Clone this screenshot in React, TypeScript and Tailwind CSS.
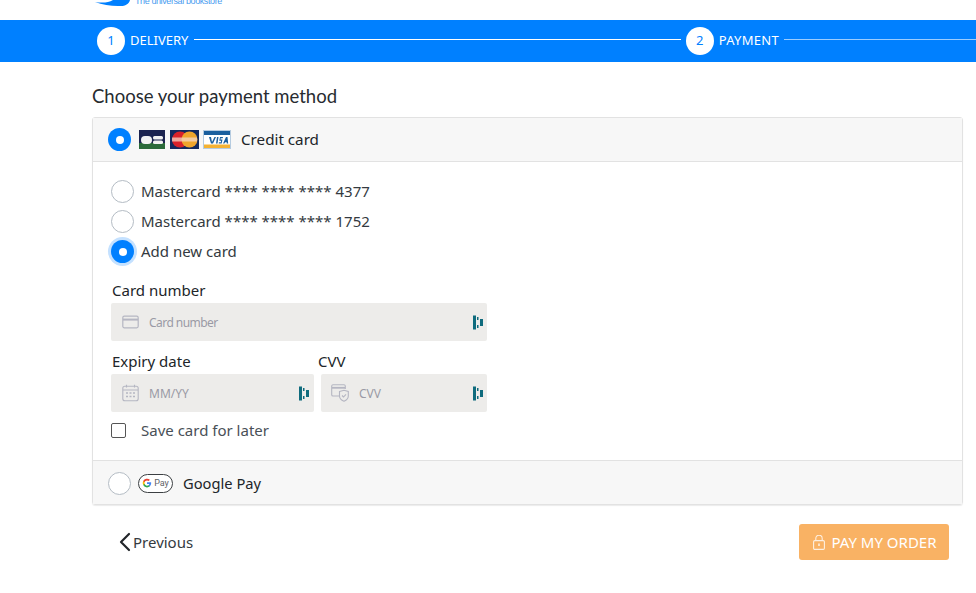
import React from 'react';
import { ChevronLeft } from 'lucide-react';

const Radio = ({ checked, ring, size = 'w-[23px] h-[23px]' }: { checked?: boolean; ring?: boolean; size?: string }) => (
  <span
    className={`${size} shrink-0 rounded-full flex items-center justify-center ${
      checked ? 'bg-[#0080ff]' : 'bg-white border border-[#b4bcc4]'
    } ${ring ? 'shadow-[0_0_0_3px_#c4e1ff]' : ''}`}
  >
    {checked && <span className="w-[8px] h-[8px] rounded-full bg-white" />}
  </span>
);

const Step = ({ n, label, labelClass = '' }: { n: number; label: string; labelClass?: string }) => (
  <>
    <span className="w-[28px] h-[28px] shrink-0 rounded-full bg-white text-[#0080ff] text-[13px] flex items-center justify-center">{n}</span>
    <span className={`ml-[5px] text-white text-[13px] shrink-0 ${labelClass}`}>{label}</span>
  </>
);

const FieldMark = () => (
  <svg width="12" height="15" viewBox="0 0 12 15" className="shrink-0">
    <rect x="1" y="0.5" width="3" height="14" fill="#0f6b7d" />
    <rect x="5" y="2" width="1.500" height="3" fill="#0f6b7d" />
    <rect x="5" y="10" width="1.500" height="3" fill="#0f6b7d" />
    <rect x="8" y="4" width="3" height="7" fill="#0f6b7d" />
  </svg>
);

const CardIcon = () => (
  <svg width="17" height="14" viewBox="0 0 17 14" fill="none" stroke="#b5b6c2" strokeWidth="1.2">
    <rect x="0.8" y="1.2" width="15.4" height="11.6" rx="1.5" />
    <path d="M1 4.6h15" strokeWidth="2" />
  </svg>
);

const CalendarIcon = () => (
  <svg width="17" height="18" viewBox="0 0 17 18" fill="none" stroke="#b5b6c2" strokeWidth="1.1">
    <rect x="0.8" y="2.2" width="15.4" height="14.6" rx="2" />
    <path d="M1 6h15M4.500 0.800v2.600M12.500 0.800v2.600" />
    <path d="M4 9h2M7.500 9h2M11 9h2M4 12.500h2M7.500 12.500h2M11 12.500h2" strokeWidth="1.4" />
  </svg>
);

const CvvIcon = () => (
  <svg width="18" height="18" viewBox="0 0 18 18" fill="none" stroke="#b5b6c2" strokeWidth="1.1">
    <path d="M8 12H2a1.300 1.300 0 0 1-1.300-1.300V2A1.300 1.300 0 0 1 2 .800h11A1.300 1.300 0 0 1 14.300 2v3" />
    <path d="M1 3.800h13" strokeWidth="1.8" />
    <path d="M8.500 7.500l4.500-1.300 4.300 1.300v4.500c0 2.500-2 4.300-4.300 5.200-2.400-.900-4.500-2.700-4.500-5.200z" fill="#edecea" />
    <path d="M11 11.500l1.500 1.500 2.500-2.700" />
  </svg>
);

const CbLogo = () => (
  <svg width="26" height="19" viewBox="0 0 26 19" className="mr-px">
    <rect width="26" height="13" fill="#1c2450" />
    <rect y="13" width="26" height="6" fill="#2b6a3a" />
    <rect x="2" y="6" width="11" height="8" rx="4" fill="#f2f2f2" />
    <rect x="14" y="6" width="10" height="3.600" rx="1.500" fill="#f2f2f2" />
    <rect x="14" y="10.400" width="10" height="3.600" rx="1.500" fill="#f2f2f2" />
  </svg>
);

const McLogo = () => (
  <svg width="29" height="19" viewBox="0 0 29 19">
    <rect width="29" height="19" fill="#14295e" />
    <circle cx="10" cy="9.500" r="8" fill="#d9222a" />
    <circle cx="19.500" cy="9.500" r="8" fill="#f0a52c" />
    <rect x="2" y="7.500" width="25" height="4" fill="#f7d7c4" opacity="0.75" />
  </svg>
);

const VisaLogo = () => (
  <svg width="28" height="19" viewBox="0 0 28 19">
    <rect width="28" height="19" fill="#b5cbe0" />
    <rect x="1" y="1" width="26" height="17" fill="#ffffff" />
    <rect x="1" y="1" width="26" height="4" fill="#1a5f9e" />
    <rect x="1" y="14.500" width="26" height="3.500" fill="#f4b233" />
    <path d="M6 7h2l1 5 2.500-5h1.500l-3 6.500H8zM14 7h1.500l-1 6.500H13zM17 7h3l-.3 1.200h-2l-.2 1.200h2l-.8 4h-3l.2-1.200h2l.2-1.500h-1.800zM23 7h1.500l.7 6.500h-1.400l-.1-1.300h-1.600l-.7 1.300h-1.400z" fill="#1a5f9e" />
  </svg>
);

const GPayLogo = () => (
  <span className="w-[35px] h-[19px] rounded-[10px] border border-[#3c4043] bg-white flex items-center justify-center gap-[2px] shrink-0">
    <svg width="10" height="10" viewBox="0 0 24 24">
      <path d="M22 12.200c0-.700-.100-1.400-.200-2H12v4h5.600a4.800 4.800 0 0 1-2 3.100v2.600h3.300c1.900-1.800 3.100-4.400 3.100-7.700z" fill="#4285f4" />
      <path d="M12 22.500c2.800 0 5.100-.900 6.900-2.600l-3.300-2.600c-.900.600-2.100 1-3.600 1-2.700 0-5-1.800-5.800-4.300H2.800v2.700A10.400 10.400 0 0 0 12 22.500z" fill="#34a853" />
      <path d="M6.200 14a6.200 6.200 0 0 1 0-4V7.300H2.800a10.400 10.400 0 0 0 0 9.400z" fill="#fbbc05" />
      <path d="M12 5.700c1.500 0 2.900.500 4 1.600l3-3A10.400 10.400 0 0 0 2.800 7.300L6.200 10c.800-2.500 3.100-4.300 5.800-4.300z" fill="#ea4335" />
    </svg>
    <span className="text-[9px] leading-none text-[#5f6368] font-['Roboto',sans-serif]">Pay</span>
  </span>
);

const OrderLock = () => (
  <svg width="12" height="15" viewBox="0 0 12 15" fill="none" stroke="#ffffff" strokeWidth="1.1" className="shrink-0 opacity-80">
    <rect x="0.600" y="5.600" width="10.800" height="8.800" rx="1.200" />
    <path d="M2.800 5.500V3.400a3.200 3.200 0 0 1 6.400 0v2.100" />
    <path d="M6 8.500v2.500" strokeWidth="1.600" />
  </svg>
);

export default function App() {
  return (
    <div className="min-h-[593px] bg-white font-['Noto_Sans','Open_Sans',sans-serif] text-[#212529] overflow-hidden">
      {/* logo, cut off by the top of the page */}
      <div className="h-[20px] pl-[95px] overflow-hidden">
        <div className="flex items-start gap-[4px] h-[7px] overflow-hidden">
          <svg width="36" height="7" viewBox="0 0 36 7" className="shrink-0">
            <path d="M0 2C7 3 13 3 18 0L35 0C34 4 30 6 26 6C18 6.500 8 5 0 2z" fill="#0080ff" />
          </svg>
          <span className="text-[#4a9cf0] text-[9px] leading-[9px] -mt-[3px] tracking-[-0.4px] font-['Liberation_Sans',sans-serif] whitespace-nowrap">The universal bookstore</span>
        </div>
      </div>

      {/* steps */}
      <div className="h-[42px] bg-[#0080ff] pl-[97px] flex items-center">
        <Step n={1} label="DELIVERY" />
        <span className="ml-[6px] mr-[5px] flex-1 h-px bg-white -mt-[3px]" />
        <Step n={2} label="PAYMENT" labelClass="tracking-[0.3px]" />
        <span className="ml-[5px] w-[192px] shrink-0 h-px bg-[#9ccdff] -mt-[3px]" />
      </div>

      <div className="ml-[92px] w-[871px]">
        <h1 className="mt-[22px] h-[33px] text-[18.5px] leading-[25px] font-['Lato',sans-serif] text-[#272b30]">Choose your payment method</h1>

        <div className="border border-[#e2e2e2] rounded-[3px] shadow-[0_1px_1px_rgba(0,0,0,0.08)]">
          <div className="h-[44px] bg-[#f7f7f7] border-b border-[#e2e2e2] pl-[15px] flex items-center">
            <Radio checked />
            <span className="ml-[8px] flex items-center gap-[4px]">
              <CbLogo />
              <McLogo />
              <VisaLogo />
            </span>
            <span className="ml-[10px] text-[15.2px]">Credit card</span>
          </div>

          <div className="h-[298px] pl-[18px] pt-[18px] bg-white">
            <div className="flex flex-col gap-[7px]">
              <label className="h-[23px] flex items-center gap-[7px] text-[15px] text-[#343a40]"><Radio />Mastercard **** **** **** 4377</label>
              <label className="h-[23px] flex items-center gap-[7px] text-[15px] text-[#343a40]"><Radio />Mastercard **** **** **** 1752</label>
              <label className="h-[23px] flex items-center gap-[7px] text-[15px] text-[#343a40]"><Radio checked ring />Add new card</label>
            </div>

            <div className="mt-[16px] ml-px text-[15px] leading-[22px]">Card number</div>
            <div className="mt-[2px] w-[376px] h-[38px] bg-[#edecea] rounded-[2px] flex items-center pl-[11px] pr-[3px]">
              <CardIcon />
              <span className="ml-[10px] pt-[2px] flex-1 text-[12px] tracking-[-0.55px] text-[#9a9aa5]">Card number</span>
              <FieldMark />
            </div>

            <div className="mt-[9px] flex gap-[7px]">
              <div className="w-[203px]">
                <div className="ml-px text-[15px] leading-[22px]">Expiry date</div>
                <div className="mt-[2px] h-[38px] bg-[#edecea] rounded-[2px] flex items-center pl-[11px] pr-[4px]">
                  <CalendarIcon />
                  <span className="ml-[10px] pt-[2px] flex-1 text-[12px] text-[#9a9aa5]">MM/YY</span>
                  <FieldMark />
                </div>
              </div>
              <div className="w-[166px]">
                <div className="-ml-[3px] text-[15px] leading-[22px]">CVV</div>
                <div className="mt-[2px] h-[38px] bg-[#edecea] rounded-[2px] flex items-center pl-[10px] pr-[3px]">
                  <CvvIcon />
                  <span className="ml-[10px] pt-[2px] flex-1 text-[12px] text-[#9a9aa5]">CVV</span>
                  <FieldMark />
                </div>
              </div>
            </div>

            <label className="mt-[8px] flex items-center gap-[15px] text-[15px] text-[#495057] h-[20px]">
              <span className="w-[15px] h-[15px] rounded-[2px] border border-[#555] bg-white shrink-0" />
              Save card for later
            </label>
          </div>

          <div className="h-[44px] bg-[#f7f7f7] border-t border-[#e2e2e2] pl-[15px] pt-px flex items-center">
            <Radio />
            <span className="ml-[7px]"><GPayLogo /></span>
            <span className="ml-[10px] text-[14.7px]">Google Pay</span>
          </div>
        </div>

        <div className="mt-[19px] h-[36px] pl-[25px] pr-[14px] flex items-center justify-between">
          <button className="flex items-center text-[15px] text-[#343a40]">
            <ChevronLeft size={32} strokeWidth={1.6} className="-ml-[8px] -mr-[8px] text-[#212529]" />
            Previous
          </button>
          <button className="w-[150px] h-[36px] rounded-[3px] bg-[#f9b264] text-white text-[15px] pl-[2px] flex items-center justify-center gap-[6px]">
            <OrderLock />
            PAY MY ORDER
          </button>
        </div>
      </div>
    </div>
  );
}
